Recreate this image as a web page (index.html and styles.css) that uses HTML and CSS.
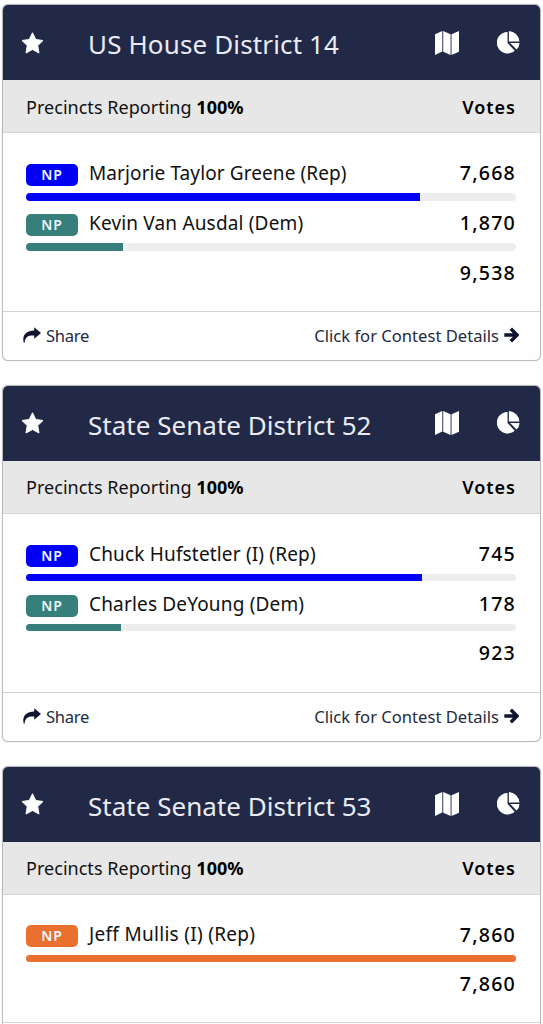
FILE: index.html
```html
<!DOCTYPE html>
<html lang="en">
<head>
<meta charset="utf-8">
<title>Election Results</title>
<link rel="stylesheet" href="styles.css">
</head>
<body>
<svg class="sprite" width="0" height="0">
  <symbol id="star" viewBox="0 0 24 23"><path d="M12 .8 15.4 7.8 23 8.9 17.5 14.2 18.8 22 12 18.3 5.2 22 6.5 14.2 1 8.9 8.6 7.8Z" stroke="currentColor" stroke-linejoin="round"/></symbol>
  <symbol id="map" viewBox="0 0 24 24"><path d="M0 3.2 7.3 0V20.6L0 24ZM8.2 0 15.6 3.2V24L8.2 20.8ZM16.5 3.2 24 0V20.8L16.5 24Z"/></symbol>
  <symbol id="pie" viewBox="0 0 24 24"><path d="M11 1V12.5L18.5 20.5A11.2 11.2 0 1 1 11 1ZM12.4 0A11.5 11.5 0 0 1 23.4 11H12.4ZM13.7 12.4H23.5Q23.3 16.8 20.4 19.3Z"/></symbol>
  <symbol id="share" viewBox="0 0 18 16"><path d="M11.2.2 18 6 11.2 11.8V8.6C5.2 8.3 2.2 10 1.5 15.8H.8C-1.2 8.3 2.8 3.5 11.2 3.4Z"/></symbol>
  <symbol id="arrow" viewBox="0 0 16 16"><path d="M1.3 8H14M7.8 1.7 14.1 8 7.8 14.3" fill="none" stroke="currentColor" stroke-width="3.4"/></symbol>
</svg>
<main class="contests">
  <section class="card">
    <header class="head"><svg class="star"><use href="#star"/></svg><h2 class="title first">US House District 14</h2><svg class="map"><use href="#map"/></svg><svg class="pie"><use href="#pie"/></svg></header>
    <div class="sub"><span class="reporting">Precincts Reporting <b>100%</b></span><b class="votes-label">Votes</b></div>
    <div class="body">
      <div class="row"><span class="badge rep">NP</span><span class="name long">Marjorie Taylor Greene (Rep)</span><span class="votes">7,668</span></div>
      <div class="bar"><div class="fill rep" style="width:80.4%"></div></div>
      <div class="row"><span class="badge dem">NP</span><span class="name">Kevin Van Ausdal (Dem)</span><span class="votes">1,870</span></div>
      <div class="bar"><div class="fill dem" style="width:19.7%"></div></div>
      <div class="row total"><span class="votes">9,538</span></div>
    </div>
    <footer class="foot"><a class="link"><svg class="share"><use href="#share"/></svg><span class="share-text">Share</span></a><a class="link"><span class="details">Click for Contest Details</span><svg class="arrow"><use href="#arrow"/></svg></a></footer>
  </section>
  <section class="card">
    <header class="head"><svg class="star"><use href="#star"/></svg><h2 class="title">State Senate District 52</h2><svg class="map"><use href="#map"/></svg><svg class="pie"><use href="#pie"/></svg></header>
    <div class="sub"><span class="reporting">Precincts Reporting <b>100%</b></span><b class="votes-label">Votes</b></div>
    <div class="body">
      <div class="row"><span class="badge rep">NP</span><span class="name">Chuck Hufstetler (I) (Rep)</span><span class="votes">745</span></div>
      <div class="bar"><div class="fill rep" style="width:80.8%"></div></div>
      <div class="row"><span class="badge dem">NP</span><span class="name">Charles DeYoung (Dem)</span><span class="votes">178</span></div>
      <div class="bar"><div class="fill dem" style="width:19.3%"></div></div>
      <div class="row total"><span class="votes">923</span></div>
    </div>
    <footer class="foot"><a class="link"><svg class="share"><use href="#share"/></svg><span class="share-text">Share</span></a><a class="link"><span class="details">Click for Contest Details</span><svg class="arrow"><use href="#arrow"/></svg></a></footer>
  </section>
  <section class="card">
    <header class="head"><svg class="star"><use href="#star"/></svg><h2 class="title">State Senate District 53</h2><svg class="map"><use href="#map"/></svg><svg class="pie"><use href="#pie"/></svg></header>
    <div class="sub"><span class="reporting">Precincts Reporting <b>100%</b></span><b class="votes-label">Votes</b></div>
    <div class="body">
      <div class="row"><span class="badge other">NP</span><span class="name short">Jeff Mullis (I) (Rep)</span><span class="votes">7,860</span></div>
      <div class="bar"><div class="fill other" style="width:100%"></div></div>
      <div class="row total"><span class="votes">7,860</span></div>
    </div>
    <footer class="foot"></footer>
  </section>
</main>
</body>
</html>
```
FILE: styles.css
```css
* { box-sizing: border-box; }
html, body { margin: 0; height: 1024px; overflow: hidden; background: #fefefe; }
body { font-family: "Noto Sans", "Open Sans", sans-serif; color: #111; }
.sprite { display: none; }
svg { fill: currentColor; display: block; flex: none; }
.contests { padding: 4px 2px 0; display: flex; flex-direction: column; gap: 24px; }
.card { border: 1px solid #b9babf; box-shadow: 0 0 1px #b9babf; border-radius: 6px; overflow: hidden; background: #fefefe; flex: none; }
.head { height: 75px; background: #222947; color: #fff; display: flex; align-items: center; padding: 0 20px 0 18px; }
.star { width: 23px; height: 22px; }
.title { margin: 3px auto 0 44px; font-size: 26px; font-weight: 400; line-height: 36px; letter-spacing: 0.03px; white-space: nowrap; color: #e9ebf5; }
.title.first { letter-spacing: 0.14px; }
.map { width: 24px; height: 24px; margin-right: 38px; }
.pie { width: 23px; height: 23px; margin-top: -1px; }
.sub { height: 53px; background: #e7e7e7; border-bottom: 1px solid #d5d5d5; display: flex; justify-content: space-between; align-items: center; padding: 1px 24px 0 23px; font-size: 18px; letter-spacing: 0.03px; white-space: nowrap; }
.sub b { color: #000; }
.votes-label { font-weight: 600; letter-spacing: 1px; }
.body { padding: 17.5px 24px 16.3px 23px; }
.row { height: 42.5px; display: flex; align-items: center; font-size: 19px; white-space: nowrap; }
.name { letter-spacing: 0.17px; margin-top: 2px; }
.name.long { letter-spacing: 0.1px; }
.name.short { letter-spacing: 0.3px; }
.badge { width: 52px; height: 22px; margin: 6px 11px 0 0; border-radius: 5px; color: #e9f7ff; font-size: 14px; font-weight: 600; line-height: 22px; text-align: center; letter-spacing: 1px; }
.votes { margin: 1.5px 0 0 auto; color: #000; font-size: 19.6px; font-weight: 500; letter-spacing: 1.2px; }
.bar { height: 7.5px; border-radius: 4px; background: #ededed; overflow: hidden; }
.fill { height: 100%; }
.rep { background: #0000f8; }
.dem { background: #367f7b; }
.other { background: #e9702e; }
.total { height: 44px; }
.total .votes { margin-top: -1px; }
.foot { height: 49px; border-top: 1px solid #d2d3d5; display: flex; justify-content: space-between; align-items: center; padding: 0 21px 0 20px; font-size: 16.6px; color: #252a40; white-space: nowrap; }
.link { display: flex; align-items: center; margin-top: -1px; }
.share { width: 18px; height: 16px; margin-right: 5px; color: #10142f; }
.share-text { letter-spacing: -0.3px; }
.arrow { width: 16px; height: 16px; margin-left: 4px; color: #10142f; }
```
